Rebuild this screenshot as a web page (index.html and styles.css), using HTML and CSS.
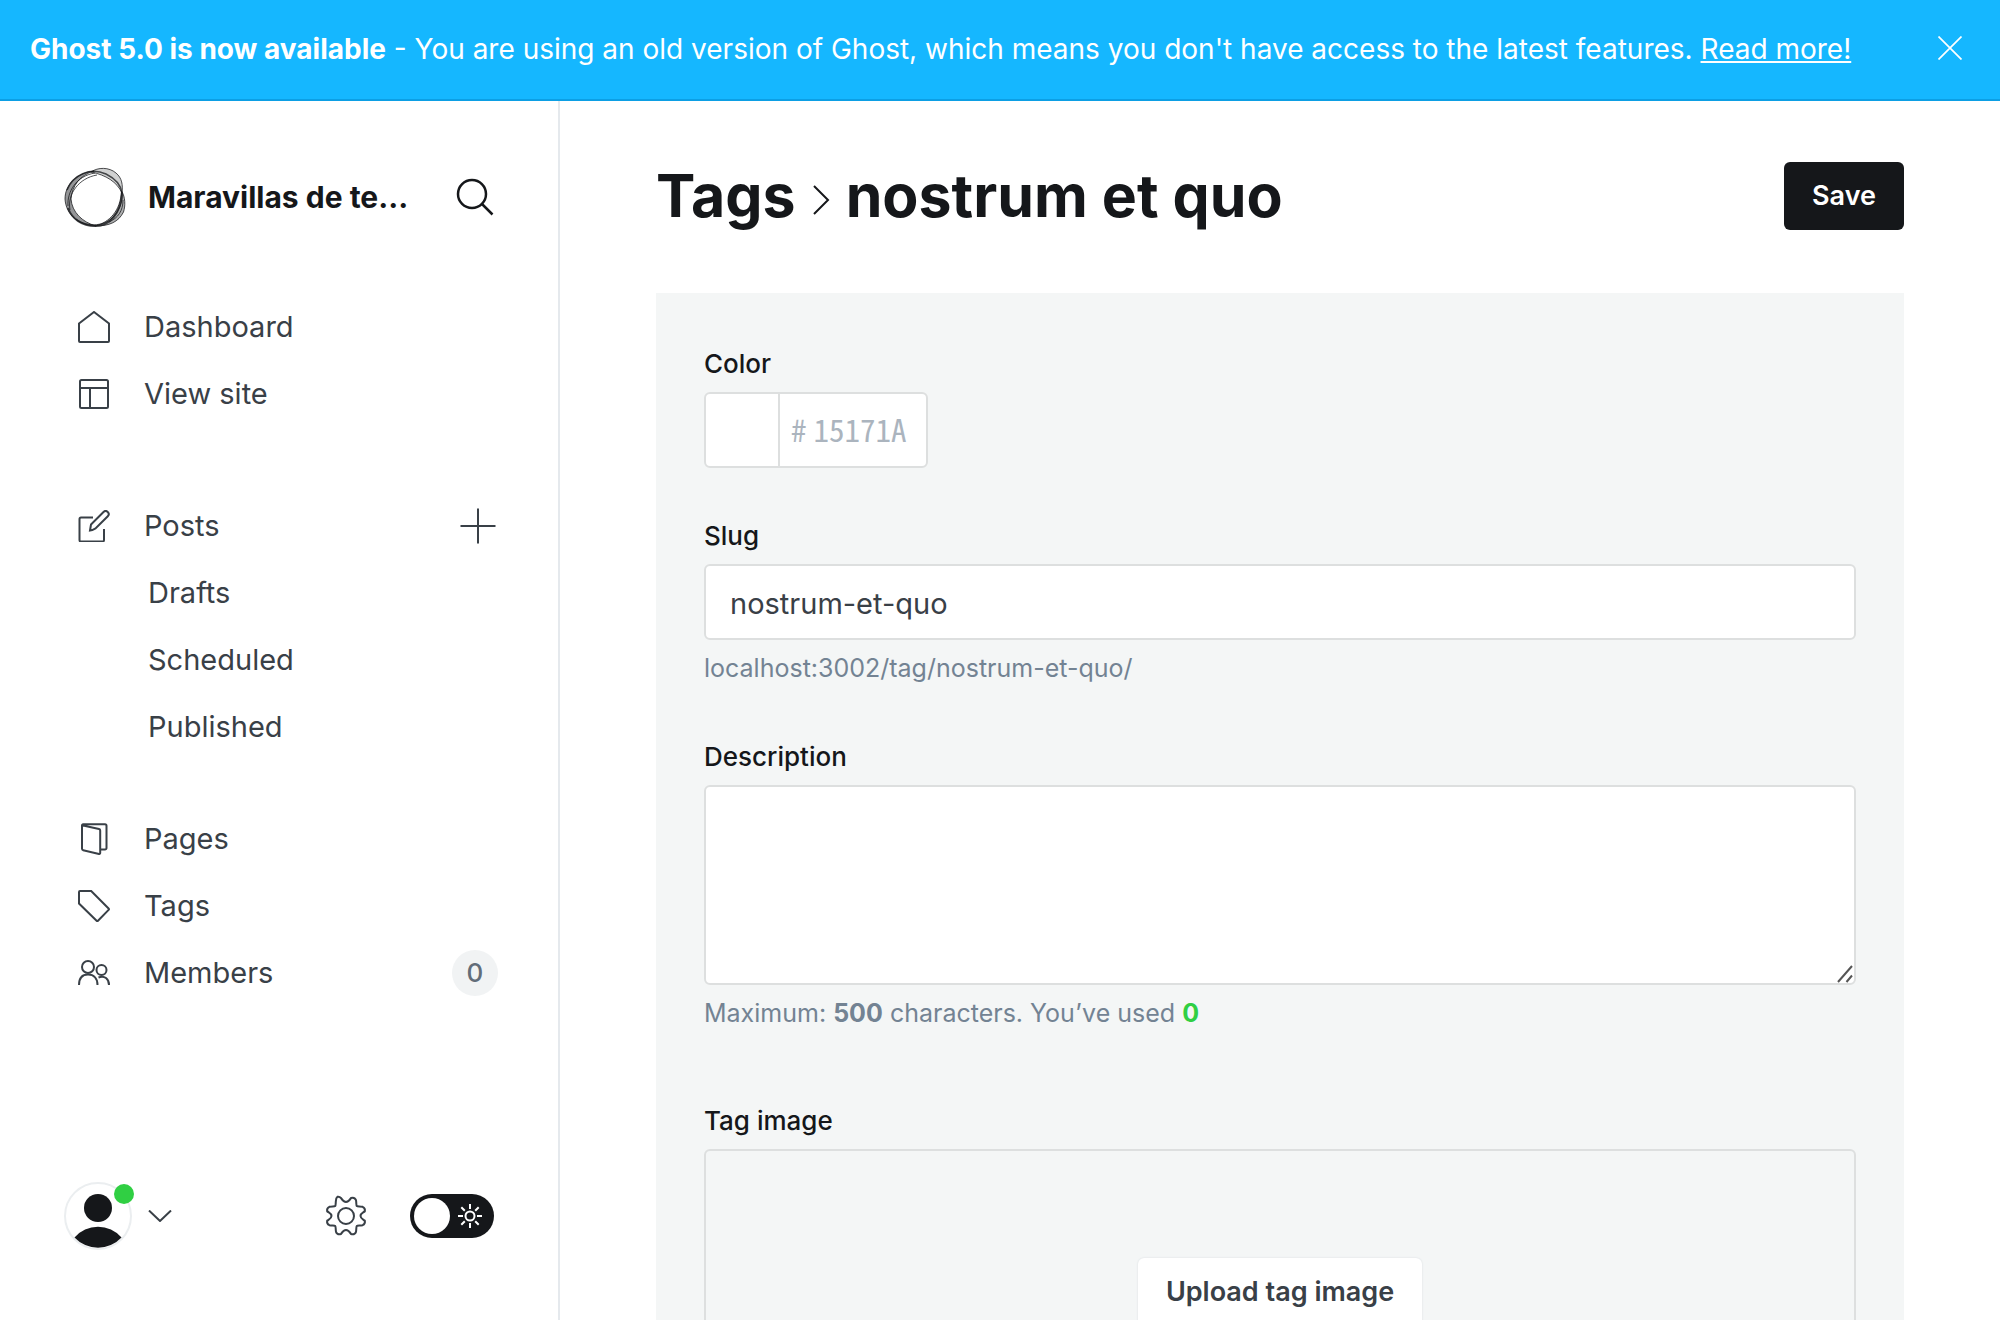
FILE: index.html
```html
<!DOCTYPE html>
<html lang="en">
<head>
<meta charset="utf-8">
<meta name="viewport" content="width=device-width, initial-scale=1">
<title>Tags - nostrum et quo</title>
<link rel="stylesheet" href="styles.css">
</head>
<body>
<div class="app">
  <aside class="alert">
    <p class="alert-text"><strong>Ghost 5.0 is now available</strong> - You are using an old version of Ghost, which means you don't have access to the latest features. <a href="#">Read more!</a></p>
    <button class="alert-close" type="button" aria-label="Close">
      <svg width="24" height="24" viewBox="0 0 24 24"><path d="M.5.5l23 23M23.500.5l-23 23" stroke-width="1.700"/></svg>
    </button>
  </aside>

  <div class="viewport">
    <nav class="sidebar">
      <header class="brand">
        <svg class="brand-logo" width="62" height="62" viewBox="0 0 62 62">
          <g fill="#15171a" stroke="#15171a" stroke-width="1" stroke-opacity=".75">
            <path fill-opacity=".45" d="M30 5C12 7 1 19 1 33c1 16 14 27 31 27C18 56 8 46 7 33 8 20 16 9 30 5z"/>
            <path fill-opacity=".2" d="M27 6c7-5 18-5 25 1 6 5 7 12 6 20C53 16 42 9 27 6z"/>
            <path fill-opacity=".35" d="M57.500 25c4 6 4 15 2 21-5 10-14 14-28 14 14-4 25-15 26-35z"/>
            <g fill="none">
              <path d="M3 24C9 9 26 1 42 8c10 5 15 11 16 19" stroke-width="1.500"/>
              <path d="M4 42c4 11 14 18 27 18 15 0 26-13 27-33" stroke-width="2"/>
              <path d="M4 40C3 26 12 10 31 7M6 44C3 28 15 12 33 9M12 53C24 62 42 60 50 50 56 43 59 35 58 27"/>
              <path d="M45 56c9-4 14-11 14-22"/>
            </g>
          </g>
        </svg>
        <span class="brand-name">Maravillas de te...</span>
        <button class="icon-button" type="button" aria-label="Search">
          <svg width="38" height="38" viewBox="0 0 38 38"><circle cx="16" cy="16" r="14" stroke-width="2.500"/><path d="M26 26l10.500 10.500" stroke-width="2.500"/></svg>
        </button>
      </header>

      <ul class="nav-list">
        <li><a class="nav-link" href="#"><svg width="32" height="32" viewBox="0 0 32 32"><path d="M1 12.500L16 1l15 11.500V30a1 1 0 0 1-1 1H2a1 1 0 0 1-1-1z"/></svg>Dashboard</a></li>
        <li><a class="nav-link" href="#"><svg width="32" height="32" viewBox="0 0 32 32"><rect x="2" y="2" width="28" height="28" rx="1.500"/><path d="M2 10h28M12 10v20"/></svg>View site</a></li>
      </ul>

      <ul class="nav-list nav-posts">
        <li class="nav-row"><a class="nav-link" href="#"><svg width="32" height="32" viewBox="0 0 32 32"><path d="M15 7.500H3A1.500 1.500 0 0 0 1.500 9v21A1.500 1.500 0 0 0 3 31.500h21.500A1.500 1.500 0 0 0 26 30V19M12 20.500l1-6L25.500 2a3 3 0 0 1 4.300 4.200L17.500 18.500l-3.200 1.600z"/></svg>Posts</a>
          <button class="icon-button" type="button" aria-label="New post"><svg width="36" height="36" viewBox="0 0 36 36"><path d="M18 .5v35M.5 18h35"/></svg></button></li>
        <li><a class="nav-link nav-sub" href="#">Drafts</a></li>
        <li><a class="nav-link nav-sub" href="#">Scheduled</a></li>
        <li><a class="nav-link nav-sub" href="#">Published</a></li>
      </ul>

      <ul class="nav-list">
        <li><a class="nav-link" href="#"><svg width="32" height="32" viewBox="0 0 32 32"><path d="M4 2.200L21 6a1.500 1.500 0 0 1 1.200 1.500V30a1 1 0 0 1-1.200 1L5.200 27.200A1.500 1.500 0 0 1 4 25.800V2.500A1.200 1.200 0 0 1 5 1.200h22A1.500 1.500 0 0 1 28.500 2.700V25a1.500 1.500 0 0 1-1.500 1.500h-4.500"/></svg>Pages</a></li>
        <li><a class="nav-link" href="#"><svg width="32" height="32" viewBox="0 0 32 32"><path d="M1 2a1 1 0 0 1 1-1h11.200L30.600 18.500a1 1 0 0 1 0 1.400L20 30.800a1 1 0 0 1-1.400 0L1 13.500z"/></svg>Tags</a></li>
        <li class="nav-row"><a class="nav-link" href="#"><svg width="32" height="32" viewBox="0 0 32 32"><circle cx="10" cy="10" r="6"/><path d="M1 28c0-6.500 3-10.500 9-10.500s9.500 4 9.500 10.500"/><circle cx="23.500" cy="13" r="5"/><path d="M20.500 20.500c6-2.500 10.500 1.500 10.500 7.500"/></svg>Members</a>
          <span class="count">0</span></li>
      </ul>

      <footer class="sidebar-footer">
        <button class="user-menu" type="button" aria-label="User menu">
          <span class="avatar">
            <svg width="68" height="68" viewBox="0 0 68 68"><circle cx="34" cy="34" r="33" fill="#fff" stroke="#ebeef0" stroke-width="2"/><circle cx="34" cy="26" r="14" fill="#15171a" stroke="none"/><path d="M10.500 55.500a31 31 0 0 1 47 0a32 32 0 0 1-47 0z" fill="#15171a" stroke="none"/></svg>
            <span class="avatar-dot"></span>
          </span>
          <svg width="24" height="12" viewBox="0 0 24 12"><path d="M1 .500l11 10.500L23 .500"/></svg>
        </button>
        <button class="icon-button" type="button" aria-label="Settings">
          <svg width="42" height="42" viewBox="0 0 42 42"><circle cx="21" cy="21" r="8"/><path d="M12.500 1.800a4 4 0 0 1 3.500 1.200c1.700 2.600 2.500 4 5 4s3.300-1.400 5-4a4 4 0 0 1 5 2.200c.5 3 .1 5.100.8 5.800s2.800.3 5.800.8a4 4 0 0 1 2.200 4.500c-2.800 1.900-4.300 2.400-4.300 4.700s1.500 2.800 4.300 4.700a4 4 0 0 1-2.200 4.500c-3 .5-5.100.1-5.800.8s-.3 2.800-.8 5.800a4 4 0 0 1-5 2.200c-1.700-2.600-2.500-4-5-4s-3.300 1.400-5 4a4 4 0 0 1-5-2.200c-.5-3-.1-5.100-.8-5.800s-2.800-.3-5.800-.8a4 4 0 0 1-2.200-4.500C5 23.800 6.500 23.300 6.500 21S5 18.200 2.200 16.300a4 4 0 0 1 2.200-4.500c3-.5 5.100-.1 5.800-.8s.3-2.800.8-5.800a4 4 0 0 1 1.500-3.400z"/></svg>
        </button>
        <label class="theme-switch">
          <input type="checkbox" aria-label="Night shift">
          <svg width="24" height="24" viewBox="0 0 24 24"><circle cx="12" cy="12" r="4.500"/><path d="M12 0v5M12 19v5M0 12h5M19 12h5M3.300 3.300l3.500 3.500M17.200 17.200l3.500 3.500M20.700 3.300l-3.500 3.500M6.800 17.200l-3.500 3.500"/></svg>
        </label>
      </footer>
    </nav>

    <main class="main">
      <header class="main-header">
        <h1 class="title"><a href="#">Tags</a><svg width="18" height="38" viewBox="0 0 18 38"><path d="M2 9l14 14L2 37"/></svg>nostrum et quo</h1>
        <button class="button button-primary" type="button">Save</button>
      </header>

      <form class="panel">
        <div class="field">
          <label for="tag-color">Color</label>
          <div class="color-box">
            <span class="swatch"></span>
            <span class="hash">#</span>
            <input id="tag-color" class="color-input" type="text" placeholder="15171A">
          </div>
        </div>
        <div class="field">
          <label for="tag-slug">Slug</label>
          <input id="tag-slug" class="control" type="text" value="nostrum-et-quo">
          <p class="hint">localhost:3002/tag/nostrum-et-quo/</p>
        </div>
        <div class="field field-last">
          <label for="tag-description">Description</label>
          <div class="textarea-wrap">
            <textarea id="tag-description" class="control"></textarea>
            <svg class="grip" width="16" height="18" viewBox="0 0 16 18"><path d="M1 17L15 1M9.500 17l5.500-6.500"/></svg>
          </div>
          <p class="hint">Maximum: <b>500</b> characters. You’ve used <b class="used">0</b></p>
        </div>
        <div class="field">
          <label for="tag-image">Tag image</label>
          <div class="uploader">
            <button id="tag-image" class="button button-plain" type="button">Upload tag image</button>
          </div>
        </div>
      </form>
    </main>
  </div>
</div>
</body>
</html>
```

FILE: styles.css
```css
*, *::before, *::after { box-sizing: border-box; }

body {
  margin: 0;
  color: #15171a;
  background: #fff;
  font: 28px/36px Inter, "Liberation Sans", sans-serif;
}

p, h1, ul { margin: 0; padding: 0; }
ul { list-style: none; }
a { color: inherit; text-decoration: none; }
svg { display: block; flex: none; fill: none; stroke: currentColor; stroke-width: 2; }

button {
  padding: 0;
  border: 0;
  background: none;
  color: inherit;
  font: inherit;
  cursor: pointer;
}

.app { display: flex; flex-direction: column; height: 100vh; }

/* Upgrade notice */
.alert {
  display: flex;
  align-items: center;
  justify-content: space-between;
  padding: 29px 38px 32px 30px;
  border-bottom: 2px solid #0c9fe4;
  background: #15b7ff;
  color: #fff;
}
.alert-text { padding-top: 2px; }
.alert-text a { text-decoration: underline; }

.viewport { display: flex; flex: 1; min-height: 0; }

/* Sidebar */
.sidebar {
  display: flex;
  flex-direction: column;
  flex: none;
  width: 560px;
  padding: 65px 60px 70px 64px;
  border-right: 2px solid #e5e9ed;
  color: #394047;
}
.brand {
  display: flex;
  align-items: center;
  margin-bottom: 65px;
  color: #15171a;
}
.brand-name { flex: 1; margin-left: 22px; font-size: 30px; font-weight: 700; }
.brand .icon-button { margin-right: 4px; }

.nav-list { margin-bottom: 65px; font-size: 29px; }
.nav-posts { margin-bottom: 45px; }
.nav-row { display: flex; align-items: center; justify-content: space-between; }
.nav-row .icon-button { margin-right: 2px; }
.nav-link {
  display: flex;
  align-items: center;
  gap: 34px;
  height: 67px;
  padding-left: 14px;
}
.nav-sub { padding-left: 84px; }
.count {
  width: 46px;
  border-radius: 23px;
  background: #f1f3f4;
  color: #626d79;
  font-size: 26px;
  font-weight: 500;
  line-height: 46px;
  text-align: center;
}

.sidebar-footer { display: flex; align-items: center; margin-top: auto; }
.user-menu { display: flex; align-items: center; gap: 16px; margin-right: auto; }
.avatar { position: relative; }
.avatar-dot {
  position: absolute;
  top: 2px;
  right: -2px;
  width: 20px;
  height: 20px;
  border-radius: 50%;
  background: #30cf43;
}
.theme-switch {
  position: relative;
  margin: 0 4px 0 43px;
  color: #fff;
}
.theme-switch input {
  display: block;
  width: 84px;
  height: 44px;
  margin: 0;
  border-radius: 22px;
  background: #15171a;
  appearance: none;
}
.theme-switch input::before {
  content: "";
  display: block;
  width: 36px;
  height: 36px;
  margin: 4px;
  border-radius: 50%;
  background: #fff;
}
.theme-switch input { padding-top: 4px; }
.theme-switch input::before { margin-top: 0; }
.theme-switch svg { position: absolute; top: 10px; right: 12px; }

/* Main column */
.main { flex: 1; min-width: 0; padding: 61px 96px; overflow-y: auto; scrollbar-width: none; }
.main-header {
  display: flex;
  align-items: center;
  justify-content: space-between;
  margin-bottom: 63px;
}
.title {
  display: flex;
  align-items: center;
  gap: 16px;
  font-size: 59px;
  font-weight: 700;
  line-height: 66px;
}
.button {
  padding: 0 28px;
  border-radius: 6px;
  font-size: 27px;
  font-weight: 600;
  line-height: 68px;
}
.button-primary { background: #15171a; color: #fff; }
.button-plain { background: #fff; color: #394047; box-shadow: 0 0 2px #d5d9dc; }

.panel { padding: 48px; background: #f4f6f6; }
.field { margin-bottom: 45px; }
.field-last { margin-bottom: 64px; }
.field label {
  display: block;
  margin-bottom: 5px;
  font-size: 26px;
  font-weight: 500;
  line-height: 46px;
}
.control {
  display: block;
  width: 100%;
  height: 76px;
  padding: 2px 24px 0;
  border: 2px solid #dddfdf;
  border-radius: 6px;
  background: #fff;
  color: #394047;
  font: inherit;
  font-size: 29px;
}
textarea.control { height: 200px; padding: 16px 24px; resize: none; }
.textarea-wrap { position: relative; }
.grip { position: absolute; right: 3px; bottom: 2px; color: #555; }

.color-box {
  display: flex;
  align-items: center;
  width: 224px;
  height: 76px;
  padding-bottom: 2px;
  border: 2px solid #dddfdf;
  border-radius: 6px;
  background: #fff;
  color: #abb4be;
  font: 31px/36px "Noto Sans Mono CJK SC", "DejaVu Sans Mono", monospace;
}
.swatch { align-self: flex-start; width: 74px; height: 72px; border-right: 2px solid #dddfdf; }
.hash { margin: 0 7px 0 11px; }
.color-input {
  flex: 1;
  min-width: 0;
  padding: 0;
  border: 0;
  background: none;
  color: #394047;
  font: inherit;
}
.color-input::placeholder { color: #abb4be; opacity: 1; }

.hint { margin-top: 8px; color: #738393; font-size: 25px; line-height: 41px; }
.used { color: #30cf43; }

.uploader {
  display: flex;
  align-items: center;
  justify-content: center;
  height: 286px;
  border: 2px solid #dddfdf;
  border-radius: 6px;
}
```
